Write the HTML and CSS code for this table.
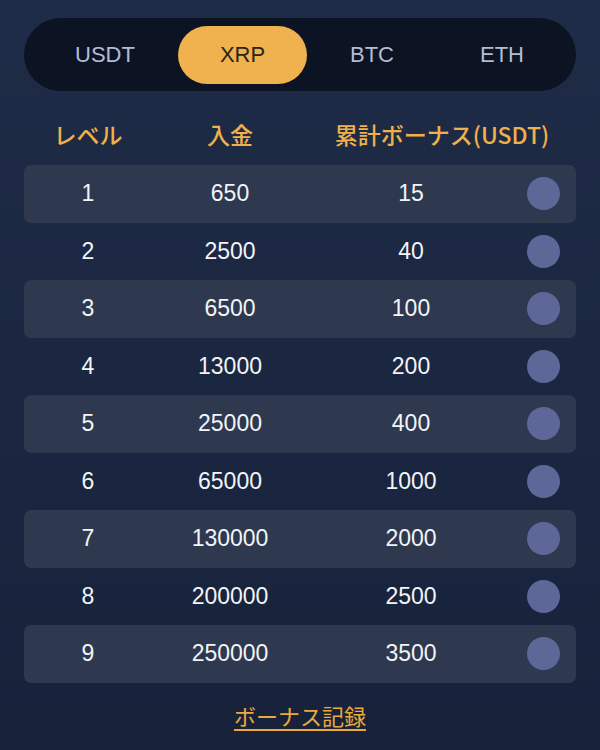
FILE: index.html
```html
<!DOCTYPE html>
<html lang="ja">
<head>
<meta charset="utf-8">
<link rel="stylesheet" href="styles.css">
</head>
<body>
<div class="page">
  <div class="tabs">
    <div class="tab">USDT</div>
    <div class="tab active">XRP</div>
    <div class="tab">BTC</div>
    <div class="tab">ETH</div>
  </div>
  <div class="head">
    <div class="c1">レベル</div>
    <div class="c2">入金</div>
    <div class="c3">累計ボーナス(USDT)</div>
  </div>
  <div class="rows">
    <div class="row alt"><div class="c1">1</div><div class="c2">650</div><div class="c3">15</div><div class="dotc"><span class="dot"></span></div></div>
    <div class="row"><div class="c1">2</div><div class="c2">2500</div><div class="c3">40</div><div class="dotc"><span class="dot"></span></div></div>
    <div class="row alt"><div class="c1">3</div><div class="c2">6500</div><div class="c3">100</div><div class="dotc"><span class="dot"></span></div></div>
    <div class="row"><div class="c1">4</div><div class="c2">13000</div><div class="c3">200</div><div class="dotc"><span class="dot"></span></div></div>
    <div class="row alt"><div class="c1">5</div><div class="c2">25000</div><div class="c3">400</div><div class="dotc"><span class="dot"></span></div></div>
    <div class="row"><div class="c1">6</div><div class="c2">65000</div><div class="c3">1000</div><div class="dotc"><span class="dot"></span></div></div>
    <div class="row alt"><div class="c1">7</div><div class="c2">130000</div><div class="c3">2000</div><div class="dotc"><span class="dot"></span></div></div>
    <div class="row"><div class="c1">8</div><div class="c2">200000</div><div class="c3">2500</div><div class="dotc"><span class="dot"></span></div></div>
    <div class="row alt"><div class="c1">9</div><div class="c2">250000</div><div class="c3">3500</div><div class="dotc"><span class="dot"></span></div></div>
  </div>
  <div class="foot"><a class="link" href="#">ボーナス記録</a></div>
</div>
</body>
</html>
```
FILE: styles.css
```css
html, body {
  margin: 0;
  padding: 0;
}
body {
  width: 600px;
  height: 750px;
  overflow: hidden;
  background: linear-gradient(180deg, #1f2c47 0%, #1b2741 50%, #17213a 100%);
  font-family: "Liberation Sans", "Noto Sans CJK JP", sans-serif;
  color: #ffffff;
}
.page {
  padding: 18px 24px 0 24px;
}
.tabs {
  display: grid;
  grid-template-columns: 146px 129px 130px 130px;
  padding: 8px 9px 7px 8px;
  height: 58px;
  background: #0c1424;
  border-radius: 37px;
}
.tab {
  display: flex;
  align-items: center;
  justify-content: center;
  font-size: 22px;
  color: #b4bcd4;
  border-radius: 29px;
}
.tab.active {
  background: #efb24f;
  color: #2a2418;
}
.head {
  display: grid;
  grid-template-columns: 128px 156px 268px;
  align-items: center;
  text-align: center;
  height: 62px;
  padding-top: 12px;
  color: #f0b04a;
  font-size: 23px;
  font-family: "Noto Sans CJK JP", "Liberation Sans", sans-serif;
  font-weight: 500;
}
.row {
  display: grid;
  grid-template-columns: 128px 156px 206px 58px;
  padding-right: 4px;
  align-items: center;
  text-align: center;
  height: 57.5px;
  font-size: 23px;
  color: #f2f4f8;
  border-radius: 7px;
}
.row.alt {
  background: #2e394f;
}
.dotc {
  display: flex;
  justify-content: center;
}
.dot {
  width: 33px;
  height: 33px;
  border-radius: 50%;
  background: #5e6898;
}
.foot {
  display: flex;
  justify-content: center;
  padding-top: 16px;
}
.link {
  font-family: "Noto Sans CJK JP", sans-serif;
  font-size: 22px;
  color: #eaa93a;
  text-decoration: underline;
  text-underline-offset: 4px;
  text-decoration-thickness: 2px;
}
```
